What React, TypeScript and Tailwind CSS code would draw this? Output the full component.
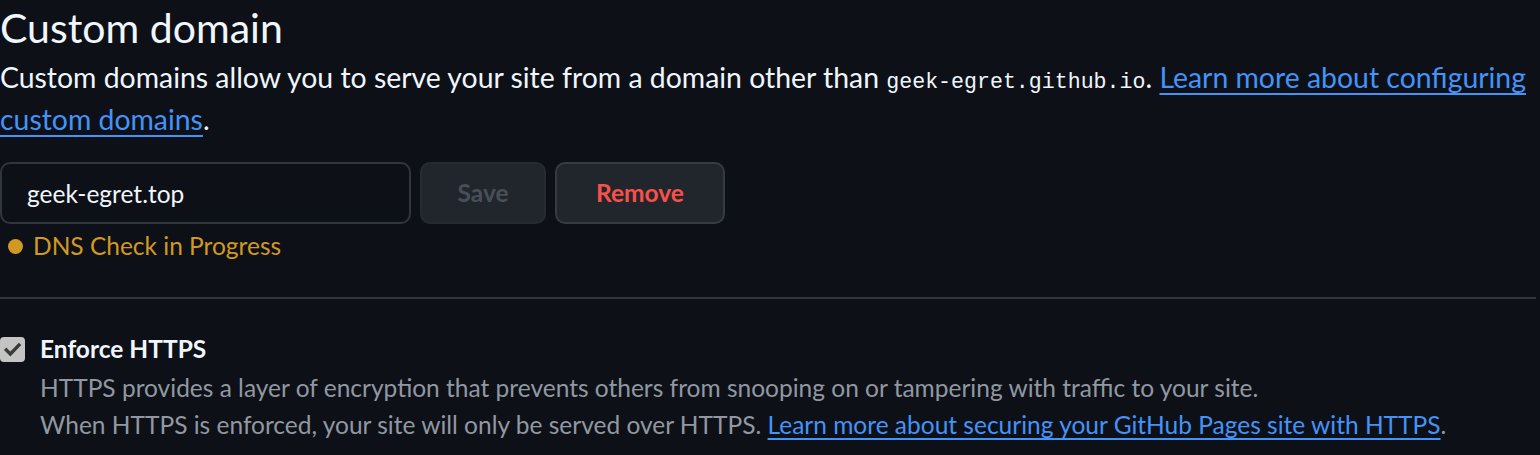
import React from 'react';

const font = "font-['Lato','Noto_Sans',sans-serif]";

const CheckMark: React.FC = () => (
  <svg viewBox="0 0 16 16" className="h-[19px] w-[19px]" fill="none">
    <path d="M2.8 8.4l3.4 3.4L13.4 4.2" stroke="#3a3a3a" strokeWidth="2.8" strokeLinecap="square" />
  </svg>
);

const App: React.FC = () => {
  return (
    <div className={`min-h-[455px] w-[1540px] bg-[#0d1117] text-[#e6edf3] ${font}`}>
      <div className="w-[1536px]">
        <h2 className="text-[41px] leading-[55px] font-normal text-[#f0f6fc]">Custom domain</h2>
        <p className="mt-[1px] text-[28.4px] leading-[42px] text-[#f0f6fc]">
          Custom domains allow you to serve your site from a domain other than{' '}
          <code className="font-['Liberation_Mono',monospace] text-[21.6px] leading-none">geek-egret.github.io</code>.{' '}
          <a href="#" className="text-[#4493f8] underline decoration-[2px] underline-offset-[5px]">
            Learn more about configuring custom domains
          </a>
          .
        </p>

        <div className="mt-[22px] flex items-center gap-[9px]">
          <input
            readOnly
            value="geek-egret.top"
            className="h-[62px] w-[411px] rounded-[10px] border-2 border-[#30363d] bg-[#0d1117] px-[25px] text-[24.5px] text-[#f0f6fc] outline-none"
          />
          <button
            disabled
            className="h-[62px] w-[126px] rounded-[10px] border-2 border-[#262b32] bg-[#21262d] text-[24.5px] font-bold text-[#484f58]"
          >
            Save
          </button>
          <button className="h-[62px] w-[170px] rounded-[10px] border-2 border-[#363b42] bg-[#21262d] text-[24.5px] font-bold text-[#f85149]">
            Remove
          </button>
        </div>

        <div className="mt-[4px] flex items-center gap-[10px] text-[24.5px] leading-[36px] text-[#d29922]">
          <span className="ml-[8px] h-[15px] w-[15px] rounded-full bg-[#d29922]" />
          <span>DNS Check in Progress</span>
        </div>

        <div className="mt-[33px] h-[2px] w-full bg-[#30363d]" />

        <div className="mt-[32px] flex gap-[15px]">
          <div className="mt-[6px] flex h-[25px] w-[25px] shrink-0 items-center justify-center rounded-[4px] bg-[#c4c4c4]">
            <CheckMark />
          </div>
          <div>
            <div className="text-[24.5px] font-bold leading-[36px] text-[#f0f6fc]">Enforce HTTPS</div>
            <div className="mt-[2px] text-[24.5px] leading-[37px] text-[#9198a1]">
              <div>HTTPS provides a layer of encryption that prevents others from snooping on or tampering with traffic to your site.</div>
              <div>
                When HTTPS is enforced, your site will only be served over HTTPS.{' '}
                <a href="#" className="text-[#4493f8] underline decoration-[2px] underline-offset-[4px]">
                  Learn more about securing your GitHub Pages site with HTTPS
                </a>
                .
              </div>
            </div>
          </div>
        </div>
      </div>
    </div>
  );
};

export default App;
